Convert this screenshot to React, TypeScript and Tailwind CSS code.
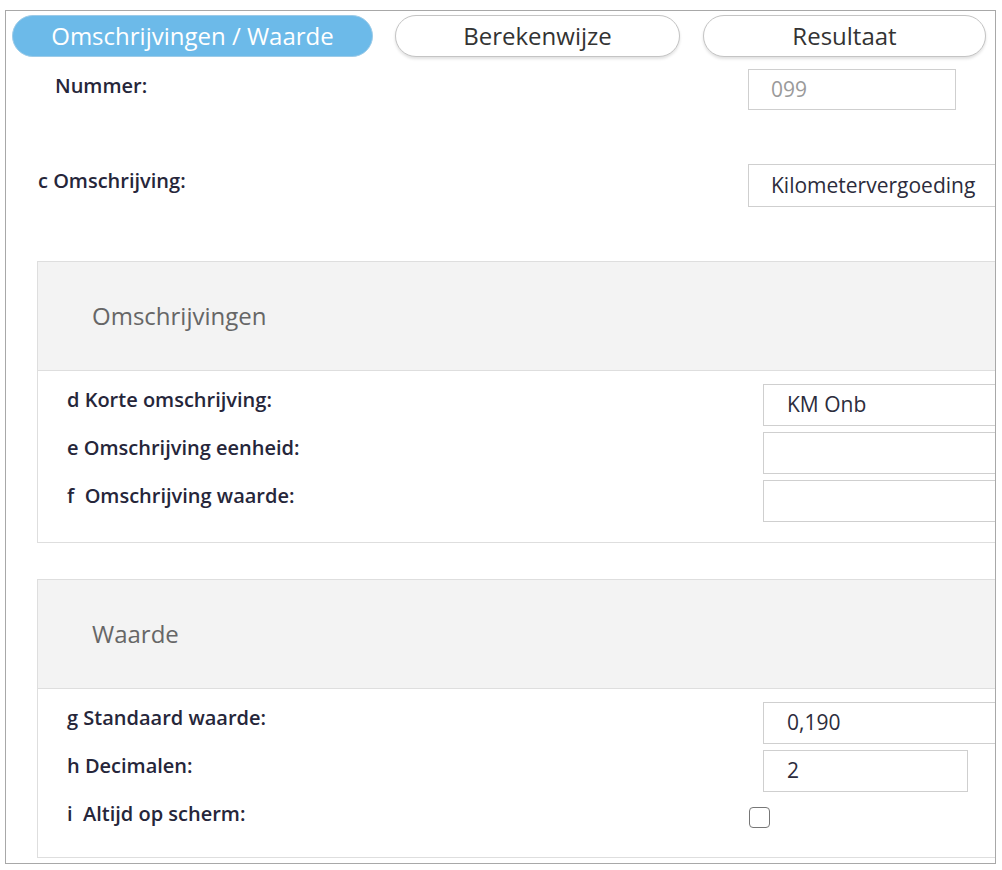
import React from 'react';

const font = { fontFamily: '"Open Sans", "Liberation Sans", sans-serif' };

type Row = { label: string; value?: string; width?: string; checkbox?: boolean };

const Tab: React.FC<{ label: string; active?: boolean; className: string }> = ({ label, active, className }) => (
  <div
    className={`${className} shrink-0 h-[42px] rounded-full flex items-center justify-center text-[24px] ${
      active
        ? 'bg-[#6cbae9] text-white border border-[#9ccbe8]'
        : 'bg-white text-[#333] border border-[#c4c4c4] shadow-[0_2px_3px_rgba(0,0,0,0.12)]'
    }`}
  >
    {label}
  </div>
);

const Field: React.FC<{ value?: string; className: string; muted?: boolean }> = ({ value, className, muted }) => (
  <div
    className={`${className} shrink-0 border border-[#cfcfcf] bg-white flex items-center text-[21px] ${
      muted ? 'text-[#9a9a9a]' : 'text-[#2c2c3c]'
    }`}
  >
    {value}
  </div>
);

const Section: React.FC<{ title: string; rows: Row[]; top: string; bottom: string }> = ({ title, rows, top, bottom }) => (
  <div className={`${top} ml-[31px] w-[1000px] border border-[#dedede]`}>
    <div className="h-[109px] bg-[#f3f3f3] border-b border-[#dedede] flex items-center pl-[54px] text-[24px] text-[#666]">
      {title}
    </div>
    <div className={`pt-[13px] ${bottom} flex flex-col gap-[6px]`}>
      {rows.map((r) => (
        <div key={r.label} className="flex items-center h-[42px]">
          <div className="w-[725px] shrink-0 pl-[29px] -mt-[10px] text-[20px] font-semibold text-[#26263a] whitespace-pre">
            {r.label}
          </div>
          {r.checkbox ? (
            <div className="shrink-0 ml-[-14px] -mt-[4px] w-[21px] h-[21px] rounded-[4px] border border-[#777] bg-white" />
          ) : (
            <Field value={r.value} className={`${r.width ?? 'w-[300px]'} h-[42px] pl-[23px]`} />
          )}
        </div>
      ))}
    </div>
  </div>
);

export default function App() {
  return (
    <div className="w-[1002px] h-[870px] bg-white pt-[10px] pl-[5px]" style={font}>
      <div className="w-[991px] h-[854px] border border-[#a8a8a8] overflow-hidden">
        {/* tabs */}
        <div className="flex pl-[6px] pt-[4px]">
          <Tab label="Omschrijvingen / Waarde" active className="w-[361px]" />
          <Tab label="Berekenwijze" className="ml-[22px] w-[285px]" />
          <Tab label="Resultaat" className="ml-[23px] w-[283px]" />
        </div>

        {/* Nummer */}
        <div className="flex items-start mt-[12px]">
          <div className="w-[742px] shrink-0 pl-[49px] pt-[2px] text-[20px] font-semibold text-[#26263a]">Nummer:</div>
          <Field value="099" muted className="w-[208px] h-[41px] pl-[22px]" />
        </div>

        {/* Omschrijving */}
        <div className="flex items-start mt-[54px]">
          <div className="w-[742px] shrink-0 pl-[32px] pt-[2px] text-[20px] font-semibold text-[#26263a]">
            c Omschrijving:
          </div>
          <Field value="Kilometervergoeding" className="w-[300px] h-[43px] pl-[22px]" />
        </div>

        <Section
          title="Omschrijvingen"
          top="mt-[54px]"
          bottom="pb-[20px]"
          rows={[
            { label: 'd Korte omschrijving:', value: 'KM Onb' },
            { label: 'e Omschrijving eenheid:' },
            { label: 'f  Omschrijving waarde:' },
          ]}
        />

        <Section
          title="Waarde"
          top="mt-[36px]"
          bottom="pb-[17px]"
          rows={[
            { label: 'g Standaard waarde:', value: '0,190' },
            { label: 'h Decimalen:', value: '2', width: 'w-[205px]' },
            { label: 'i  Altijd op scherm:', checkbox: true },
          ]}
        />
      </div>
    </div>
  );
}
